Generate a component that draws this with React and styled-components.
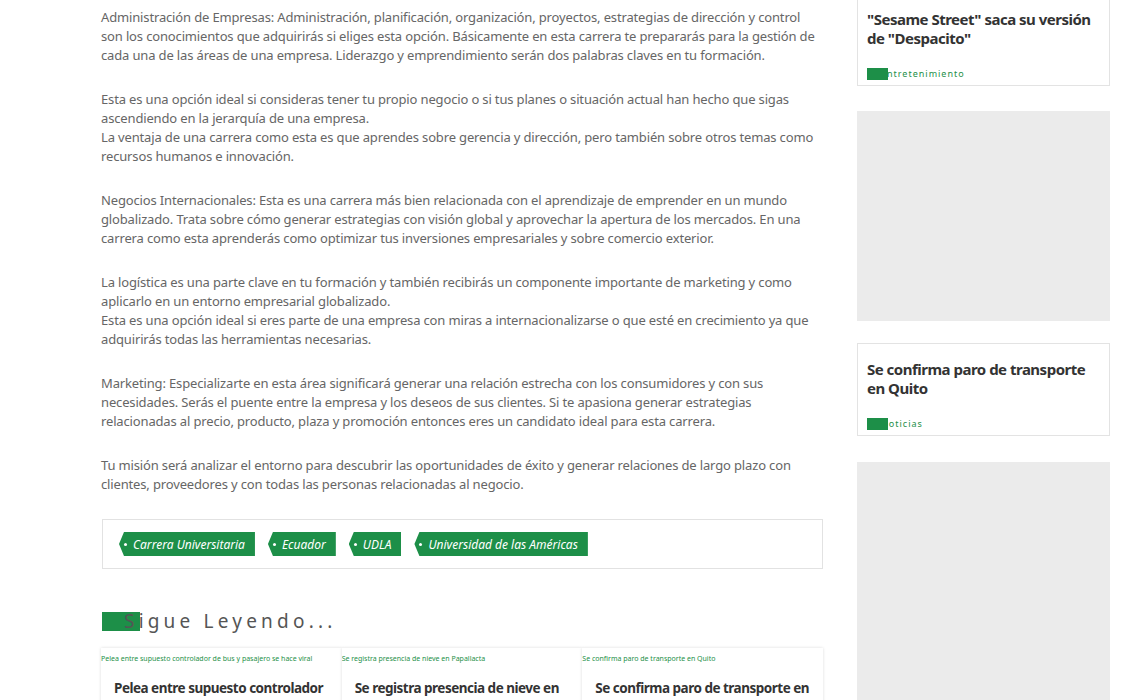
import React from "react";
import styled, { createGlobalStyle } from "styled-components";

const GREEN = "#1d8f48";

const Global = createGlobalStyle`
  html, body {
    margin: 0;
    padding: 0;
    background: #fff;
    overflow: hidden;
  }
  body {
    font-family: "Noto Sans", "Open Sans", sans-serif;
  }
`;

const Page = styled.div`
  width: 1140px;
  height: 700px;
  overflow: hidden;
  display: grid;
  grid-template-columns: 722px 253px;
  column-gap: 34px;
  padding-left: 101px;
  box-sizing: border-box;
`;

const Main = styled.main`
  padding-top: 8px;
`;

const Paragraph = styled.p`
  margin: 0 0 25px;
  font-size: 13px;
  line-height: 19px;
  color: #666;
  letter-spacing: -0.15px;
`;

const TagBox = styled.div`
  border: 1px solid #e2e2e2;
  padding: 12px 16px;
  display: flex;
  gap: 13px;
  margin-left: 1px;
`;

const Tag = styled.span`
  position: relative;
  height: 24px;
  display: inline-flex;
  align-items: center;
  padding: 0 10px 0 14px;
  background: ${GREEN};
  color: #fff;
  font-size: 12px;
  font-style: italic;
  clip-path: polygon(5px 0, 100% 0, 100% 100%, 5px 100%, 0 50%);
  &::before {
    content: "";
    position: absolute;
    left: 5px;
    top: 11px;
    width: 3px;
    height: 3px;
    border-radius: 50%;
    background: #fff;
  }
`;

const Heading = styled.h3`
  position: relative;
  isolation: isolate;
  margin: 43px 0 17px 1px;
  height: 19px;
  padding-left: 22px;
  font-size: 19px;
  line-height: 19px;
  font-weight: 400;
  letter-spacing: 4.2px;
  color: #555;
  &::before {
    content: "";
    position: absolute;
    left: 0;
    top: 0;
    width: 38px;
    height: 19px;
    background: ${GREEN};
    z-index: -1;
  }
`;

const CardRow = styled.div`
  display: grid;
  grid-template-columns: repeat(3, 1fr);
`;

const Card = styled.article`
  background: #fff;
  box-shadow: 0 0 3px rgba(0, 0, 0, 0.14);
  height: 120px;
`;

const Caption = styled.div`
  font-size: 7px;
  line-height: 9px;
  color: ${GREEN};
  padding-top: 6px;
  white-space: nowrap;
  overflow: hidden;
`;

const CardTitle = styled.h4`
  margin: 16px 0 0;
  padding: 0 12px 0 13px;
  font-size: 13.5px;
  line-height: 19px;
  font-weight: 700;
  letter-spacing: -0.5px;
  color: #333;
`;

const Sidebar = styled.aside`
  display: flex;
  flex-direction: column;
  margin-top: -7px;
`;

const SideCard = styled.div`
  border: 1px solid #e3e3e3;
  padding: 16px 9px 5px;
  background: #fff;
`;

const SideTitle = styled.div`
  font-size: 15px;
  line-height: 19px;
  font-weight: 700;
  color: #333;
  letter-spacing: -0.5px;
`;

const Label = styled.div`
  position: relative;
  margin-top: 20px;
  height: 12px;
  padding-left: 14px;
  font-size: 9px;
  line-height: 12px;
  letter-spacing: 1px;
  color: ${GREEN};
  &::before {
    content: "";
    position: absolute;
    left: 0;
    top: 0;
    width: 21px;
    height: 12px;
    background: ${GREEN};
  }
`;

const GrayBox = styled.div`
  background: #ebebeb;
  height: ${(p) => p.$h}px;
  margin: ${(p) => p.$mt}px 0 ${(p) => p.$mb}px;
`;

const paragraphs = [
  [
    "Administración de Empresas: Administración, planificación, organización, proyectos, estrategias de dirección y control",
    "son los conocimientos que adquirirás si eliges esta opción. Básicamente en esta carrera te prepararás para la gestión de",
    "cada una de las áreas de una empresa. Liderazgo y emprendimiento serán dos palabras claves en tu formación.",
  ],
  [
    "Esta es una opción ideal si consideras tener tu propio negocio o si tus planes o situación actual han hecho que sigas",
    "ascendiendo en la jerarquía de una empresa.",
    "La ventaja de una carrera como esta es que aprendes sobre gerencia y dirección, pero también sobre otros temas como",
    "recursos humanos e innovación.",
  ],
  [
    "Negocios Internacionales: Esta es una carrera más bien relacionada con el aprendizaje de emprender en un mundo",
    "globalizado. Trata sobre cómo generar estrategias con visión global y aprovechar la apertura de los mercados. En una",
    "carrera como esta aprenderás como optimizar tus inversiones empresariales y sobre comercio exterior.",
  ],
  [
    "La logística es una parte clave en tu formación y también recibirás un componente importante de marketing y como",
    "aplicarlo en un entorno empresarial globalizado.",
    "Esta es una opción ideal si eres parte de una empresa con miras a internacionalizarse o que esté en crecimiento ya que",
    "adquirirás todas las herramientas necesarias.",
  ],
  [
    "Marketing: Especializarte en esta área significará generar una relación estrecha con los consumidores y con sus",
    "necesidades. Serás el puente entre la empresa y los deseos de sus clientes. Si te apasiona generar estrategias",
    "relacionadas al precio, producto, plaza y promoción entonces eres un candidato ideal para esta carrera.",
  ],
  [
    "Tu misión será analizar el entorno para descubrir las oportunidades de éxito y generar relaciones de largo plazo con",
    "clientes, proveedores y con todas las personas relacionadas al negocio.",
  ],
];

const tags = [
  "Carrera Universitaria",
  "Ecuador",
  "UDLA",
  "Universidad de las Américas",
];

const related = [
  {
    caption: "Pelea entre supuesto controlador de bus y pasajero se hace viral",
    title: "Pelea entre supuesto controlador de bus y pasajero se hace viral",
  },
  {
    caption: "Se registra presencia de nieve en Papallacta",
    title: "Se registra presencia de nieve en Papallacta",
  },
  {
    caption: "Se confirma paro de transporte en Quito",
    title: "Se confirma paro de transporte en Quito",
  },
];

export default function App() {
  return (
    <>
      <Global />
      <Page>
        <Main>
          {paragraphs.map((lines, i) => (
            <Paragraph key={i}>
              {lines.map((line, j) => (
                <React.Fragment key={j}>
                  {line}
                  {j < lines.length - 1 && <br />}
                </React.Fragment>
              ))}
            </Paragraph>
          ))}
          <TagBox>
            {tags.map((t) => (
              <Tag key={t}>{t}</Tag>
            ))}
          </TagBox>
          <Heading>Sigue Leyendo...</Heading>
          <CardRow>
            {related.map((r) => (
              <Card key={r.caption}>
                <Caption>{r.caption}</Caption>
                <CardTitle>{r.title}</CardTitle>
              </Card>
            ))}
          </CardRow>
        </Main>
        <Sidebar>
          <SideCard>
            <SideTitle>
              "Sesame Street" saca su versión de "Despacito"
            </SideTitle>
            <Label>Entretenimiento</Label>
          </SideCard>
          <GrayBox $h={210} $mt={25} $mb={22} />
          <SideCard>
            <SideTitle>Se confirma paro de transporte en Quito</SideTitle>
            <Label>Noticias</Label>
          </SideCard>
          <GrayBox $h={260} $mt={26} $mb={0} />
        </Sidebar>
      </Page>
    </>
  );
}
